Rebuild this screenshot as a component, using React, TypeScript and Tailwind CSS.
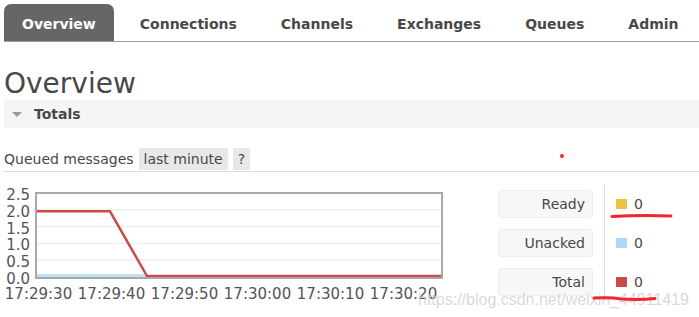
import React from "react";

const tabs = ["Overview", "Connections", "Channels", "Exchanges", "Queues", "Admin"];

const totals = [
  { label: "Ready", color: "bg-[#edc240]", value: 0 },
  { label: "Unacked", color: "bg-[#afd8f8]", value: 0 },
  { label: "Total", color: "bg-[#cb4b4b]", value: 0 },
];

// plot box in svg coords (svg sits 4px in from the page edge)
const PX = 32;
const PY = 193;
const PW = 406;
const PH = 85;
const yOf = (v: number) => PY + PH - (v / 2.5) * (PH - 1) - 1;

function QueuedChart() {
  const yTicks = [2.5, 2.0, 1.5, 1.0, 0.5, 0.0];
  const xTicks = ["17:29:30", "17:29:40", "17:29:50", "17:30:00", "17:30:10", "17:30:20"];
  return (
    <svg width={446} height={120} viewBox="0 183 446 120" className="block">
      {yTicks.map((v) => (
        <g key={v}>
          {v > 0 && v < 2.5 && (
            <line x1={PX} x2={PX + PW} y1={yOf(v)} y2={yOf(v)} stroke="#eeeeee" strokeWidth={1.5} />
          )}
          <text
            x={26}
            y={yOf(v) + 7}
            textAnchor="end"
            fontSize={15}
            fill="#545454"
            fontFamily="'DejaVu Sans', Verdana, sans-serif"
          >
            {v.toFixed(1)}
          </text>
        </g>
      ))}
      <rect x={33} y={274} width={110} height={3} fill="#afd8f8" opacity={0.8} />
      <polyline
        points={`33,${yOf(2) + 1.5} 106,${yOf(2) + 1.5} 143,276 437,276`}
        fill="none"
        stroke="#cb4b4b"
        strokeWidth={2.5}
      />
      <rect x={PX} y={PY} width={PW} height={PH} fill="none" stroke="#a8a8a8" strokeWidth={2} />
      {xTicks.map((t, i) => (
        <text
          key={t}
          x={34.5 + i * 73}
          y={299}
          textAnchor="middle"
          fontSize={15}
          fill="#545454"
          fontFamily="'DejaVu Sans', Verdana, sans-serif"
        >
          {t}
        </text>
      ))}
    </svg>
  );
}

export default function App() {
  return (
    <div className="relative w-[699px] h-[317px] overflow-hidden bg-white text-[#484848] font-['DejaVu_Sans',Verdana,sans-serif]">
      {/* Top tabs */}
      <nav className="ml-1 pt-1 flex border-b border-[#9a9a9a]">
        {tabs.map((tab, i) => (
          <div
            key={tab}
            className={`h-[37px] pt-[3px] flex items-center px-[18px] mr-2 text-[14px] font-bold rounded-t-[7px] ${
              i === 0 ? "bg-[#666666] text-white" : "text-[#484848]"
            }`}
          >
            {tab}
          </div>
        ))}
      </nav>

      <div className="pl-1">
        <h1 className="mt-[25px] text-[28px] leading-[33px] font-normal text-[#484848]">Overview</h1>

        {/* Totals section header */}
        <div className="h-[28px] flex items-center bg-[#f5f5f5]">
          <span className="ml-2 w-0 h-0 border-l-[5px] border-r-[5px] border-t-[5px] border-l-transparent border-r-transparent border-t-[#9a9a9a]" />
          <span className="ml-[12px] text-[14px] font-bold text-[#484848]">Totals</span>
        </div>

        {/* Queued messages header */}
        <div className="mt-[20px] flex items-center gap-[5px] border-b border-[#dddddd] text-[14px] pb-[1px]">
          <span>Queued messages</span>
          <span className="h-[22px] px-[5px] flex items-center bg-[#e8e8e8]">last minute</span>
          <span className="h-[22px] px-[5px] flex items-center bg-[#e8e8e8]">?</span>
        </div>

        <div className="mt-[11px] flex">
          <QueuedChart />
          <div className="ml-[48px] mt-[7px] flex flex-col gap-[11px]">
            {totals.map((t) => (
              <div
                key={t.label}
                className="w-[95px] h-[28px] pr-[7px] flex items-center justify-end bg-[#f7f7f7] border border-[#eeeeee] rounded-[3px] text-[14px]"
              >
                {t.label}
              </div>
            ))}
          </div>
          <div className="ml-[11px] mt-[2px] w-px h-[116px] bg-[#dddddd]" />
          <div className="ml-[11px] mt-[7px] flex flex-col gap-[11px]">
            {totals.map((t) => (
              <div key={t.label} className="h-[28px] flex items-center gap-[7px] text-[14px]">
                <span className={`w-[11px] h-[10px] ${t.color}`} />
                <span>{t.value}</span>
              </div>
            ))}
          </div>
        </div>
      </div>

      {/* Watermark */}
      <div className="absolute left-[418px] top-[288px] text-[16px] text-[#cfcfcf]/80 font-['Liberation_Sans',Arial,sans-serif] pointer-events-none">
        https://blog.csdn.net/weixin_44911419
      </div>

      {/* Red annotation marks */}
      <svg className="absolute left-0 top-0 pointer-events-none" width={699} height={317}>
        <circle cx={562} cy={156} r={2} fill="#f02a2a" />
        <path d="M612 216.5 Q640 215 671 216" stroke="#f0282d" strokeWidth={3} strokeLinecap="round" fill="none" />
        <path d="M594 298 Q610 297 622 299 Q640 300 655 298.5" stroke="#f0282d" strokeWidth={3} strokeLinecap="round" fill="none" />
      </svg>
    </div>
  );
}
